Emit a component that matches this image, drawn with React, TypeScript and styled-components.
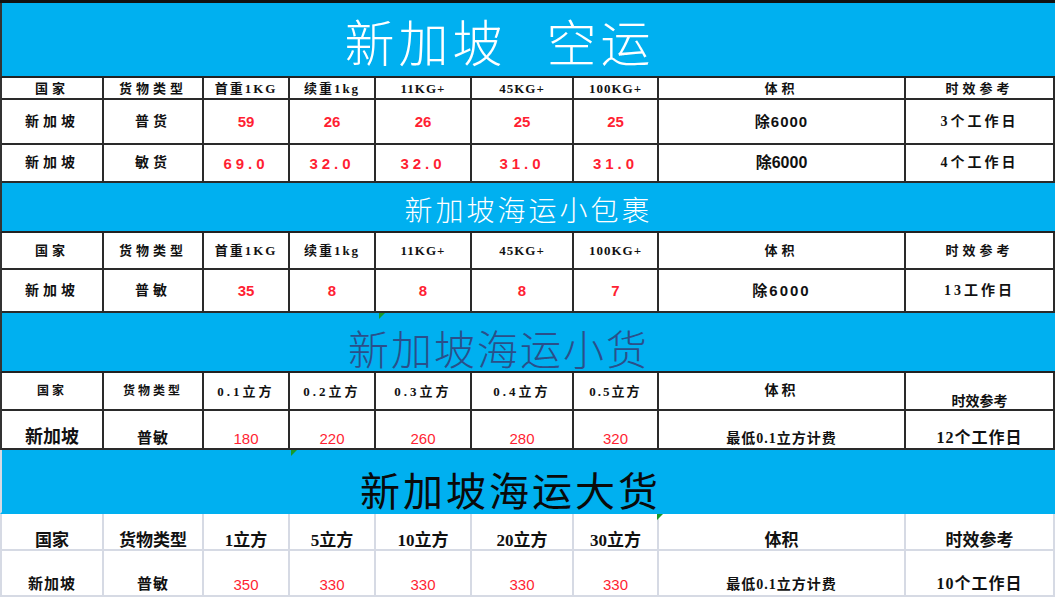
import styled, { createGlobalStyle, css } from 'styled-components'

const GlobalStyle = createGlobalStyle`
  html, body {
    margin: 0;
    padding: 0;
    background: #ffffff;
  }
  * {
    box-sizing: border-box;
  }
`

const CJK = `"Liberation Serif", "Noto Sans CJK SC", serif`
const SANS = `"Liberation Sans", "Noto Sans CJK SC", sans-serif`

const COLS = '102px 100px 86px 86px 96px 102px 85px 247px 1fr'

const Sheet = styled.div`
  width: 1055px;
  border-top: 3px solid #111;
  display: flex;
  flex-direction: column;
  overflow: hidden;
`

const Banner = styled.div<{
  $h: number
  $color: string
  $size: number
  $weight?: number
  $light?: boolean
  $pad?: number
  $shift?: number
  $spacing?: number
}>`
  position: relative;
  height: ${({ $h }) => $h}px;
  background: #00b0f0;
  display: flex;
  justify-content: center;
  align-items: center;
  padding-top: ${({ $pad = 0 }) => $pad}px;
  padding-right: ${({ $shift = 0 }) => $shift}px;
  color: ${({ $color }) => $color};
  font-family: "Noto Sans CJK SC", sans-serif;
  font-size: ${({ $size }) => $size}px;
  font-weight: ${({ $weight = 300 }) => $weight};
  letter-spacing: ${({ $spacing = 3 }) => $spacing}px;
  line-height: 1;
  border-left: 2px solid ${({ $light }) => ($light ? '#d6dae4' : '#333')};
  border-bottom: 2px solid ${({ $light }) => ($light ? '#00b0f0' : '#222')};
`

const Gap = styled.span`
  display: inline-block;
  width: 40px;
`

// little green corner flags like the ones Excel leaves on cells
const Mark = styled.span<{ $x: number }>`
  position: absolute;
  top: 0;
  left: ${({ $x }) => $x}px;
  width: 0;
  height: 0;
  border-top: 6px solid #1a9a2a;
  border-right: 6px solid transparent;
`

const Table = styled.div<{ $light?: boolean }>`
  display: grid;
  grid-template-columns: ${COLS};
  border-left: 2px solid ${({ $light }) => ($light ? '#d6dae4' : '#333')};
`

type Valign = 'center' | 'end'

const Cell = styled.div<{
  $h: number
  $light?: boolean
  $valign?: Valign
  $red?: boolean
  $size?: number
  $bold?: boolean
  $spacing?: number
  $sans?: boolean
  $pb?: number
  $mark?: boolean
}>`
  position: relative;
  height: ${({ $h }) => $h}px;
  display: flex;
  justify-content: center;
  align-items: ${({ $valign = 'center' }) => ($valign === 'end' ? 'flex-end' : 'center')};
  padding-bottom: ${({ $pb = 0 }) => $pb}px;
  border-right: 2px solid ${({ $light }) => ($light ? '#d6dae4' : '#2a2a2a')};
  border-bottom: 2px solid ${({ $light }) => ($light ? '#d6dae4' : '#2a2a2a')};
  font-family: ${({ $sans }) => ($sans ? SANS : CJK)};
  font-size: ${({ $size = 13 }) => $size}px;
  font-weight: ${({ $bold = true }) => ($bold ? 700 : 400)};
  letter-spacing: ${({ $spacing = 0 }) => $spacing}px;
  line-height: 1;
  white-space: nowrap;
  color: #111;
  ${({ $red }) =>
    $red &&
    css`
      color: #ff1f33;
    `}
  ${({ $mark }) =>
    $mark &&
    css`
      &::before {
        content: '';
        position: absolute;
        top: 0;
        left: -2px;
        border-top: 6px solid #1a9a2a;
        border-right: 6px solid transparent;
      }
    `}
`

type CellDef = {
  t: string
  red?: boolean
  size?: number
  bold?: boolean
  spacing?: number
  sans?: boolean
  valign?: Valign
  mark?: boolean
}

type RowDef = { h: number; valign?: Valign; pb?: number; cells: CellDef[] }

const Row = ({ row, light }: { row: RowDef; light?: boolean }) => (
  <>
    {row.cells.map((c, i) => (
      <Cell
        key={i}
        $h={row.h}
        $light={light}
        $valign={c.valign ?? row.valign}
        $pb={row.pb}
        $red={c.red}
        $size={c.size}
        $bold={c.bold}
        $spacing={c.spacing}
        $sans={c.sans}
        $mark={c.mark}
      >
        {c.t}
      </Cell>
    ))}
  </>
)

const kgHeader: CellDef[] = [
  { t: '国家', spacing: 4, size: 13 },
  { t: '货物类型', spacing: 4, size: 13 },
  { t: '首重1KG', spacing: 2, size: 13 },
  { t: '续重1kg', spacing: 2, size: 13 },
  { t: '11KG+', spacing: 1, size: 13 },
  { t: '45KG+', spacing: 1, size: 13 },
  { t: '100KG+', spacing: 1, size: 13 },
  { t: '体积', spacing: 4, size: 13 },
  { t: '时效参考', spacing: 4, size: 13 },
]

const red = (t: string, extra: Partial<CellDef> = {}): CellDef => ({ t, red: true, sans: true, size: 15, ...extra })

const airRows: RowDef[] = [
  { h: 22, cells: kgHeader },
  {
    h: 45,
    cells: [
      { t: '新加坡', spacing: 4, size: 14 },
      { t: '普货', spacing: 4, size: 14 },
      red('59'),
      red('26'),
      red('26'),
      red('25'),
      red('25'),
      { t: '除6000', sans: true, size: 15, spacing: 1 },
      { t: '3个工作日', spacing: 3, size: 14 },
    ],
  },
  {
    h: 38,
    cells: [
      { t: '新加坡', spacing: 4, size: 14 },
      { t: '敏货', spacing: 4, size: 14 },
      red('69.0', { spacing: 4 }),
      red('32.0', { spacing: 4 }),
      red('32.0', { spacing: 4 }),
      red('31.0', { spacing: 4 }),
      red('31.0', { spacing: 4 }),
      { t: '除6000', sans: true, size: 16 },
      { t: '4个工作日', spacing: 3, size: 14 },
    ],
  },
]

const parcelRows: RowDef[] = [
  { h: 37, cells: kgHeader },
  {
    h: 43,
    cells: [
      { t: '新加坡', spacing: 4, size: 14 },
      { t: '普敏', spacing: 4, size: 14 },
      red('35'),
      red('8'),
      red('8'),
      red('8'),
      red('7'),
      { t: '除6000', sans: true, size: 15, spacing: 2 },
      { t: '13工作日', spacing: 3, size: 14 },
    ],
  },
]

const smallRows: RowDef[] = [
  {
    h: 38,
    cells: [
      { t: '国家', spacing: 3, size: 12 },
      { t: '货物类型', spacing: 3, size: 12 },
      { t: '0.1立方', spacing: 3, size: 13 },
      { t: '0.2立方', spacing: 3, size: 13 },
      { t: '0.3立方', spacing: 3, size: 13 },
      { t: '0.4立方', spacing: 3, size: 13 },
      { t: '0.5立方', spacing: 2, size: 13 },
      { t: '体积', spacing: 3, size: 14 },
      { t: '时效参考', size: 14, valign: 'end' },
    ],
  },
  {
    h: 39,
    valign: 'end',
    pb: 2,
    cells: [
      { t: '新加坡', size: 18 },
      { t: '普敏', size: 15, spacing: 1 },
      red('180', { bold: false }),
      red('220', { bold: false }),
      red('260', { bold: false }),
      red('280', { bold: false }),
      red('320', { bold: false }),
      { t: '最低0.1立方计费', size: 14, spacing: 1 },
      { t: '12个工作日', size: 16, spacing: 1 },
    ],
  },
]

const bigRows: RowDef[] = [
  {
    h: 37,
    valign: 'end',
    cells: [
      { t: '国家', size: 17 },
      { t: '货物类型', size: 17 },
      { t: '1立方', size: 17 },
      { t: '5立方', size: 17 },
      { t: '10立方', size: 17 },
      { t: '20立方', size: 17 },
      { t: '30立方', size: 17 },
      { t: '体积', size: 17, mark: true },
      { t: '时效参考', size: 17 },
    ],
  },
  {
    h: 46,
    valign: 'end',
    pb: 3,
    cells: [
      { t: '新加坡', size: 15, spacing: 1 },
      { t: '普敏', size: 15, spacing: 1 },
      red('350', { bold: false }),
      red('330', { bold: false }),
      red('330', { bold: false }),
      red('330', { bold: false }),
      red('330', { bold: false }),
      { t: '最低0.1立方计费', size: 14, spacing: 1 },
      { t: '10个工作日', size: 16, spacing: 1 },
    ],
  },
]

const Section = ({ rows, light }: { rows: RowDef[]; light?: boolean }) => (
  <Table $light={light}>
    {rows.map((r, i) => (
      <Row key={i} row={r} light={light} />
    ))}
  </Table>
)

export default function App() {
  return (
    <>
      <GlobalStyle />
      <Sheet>
        <Banner $h={75} $color="#ffffff" $size={50} $spacing={4} $shift={58}>
          新加坡<Gap />空运
        </Banner>
        <Section rows={airRows} />

        <Banner $h={50} $color="#ffffff" $size={28} $pad={4}>
          新加坡海运小包裹
        </Banner>
        <Section rows={parcelRows} />

        <Banner $h={60} $color="#2a4f8a" $size={41} $pad={10} $spacing={2} $shift={60}>
          <Mark $x={377} />
          新加坡海运小货
        </Banner>
        <Section rows={smallRows} />

        <Banner $h={64} $color="#0a0a0a" $size={40} $pad={16} $spacing={3} $weight={400} $shift={36} $light>
          <Mark $x={289} />
          新加坡海运大货
        </Banner>
        <Section rows={bigRows} light />
      </Sheet>
    </>
  )
}
